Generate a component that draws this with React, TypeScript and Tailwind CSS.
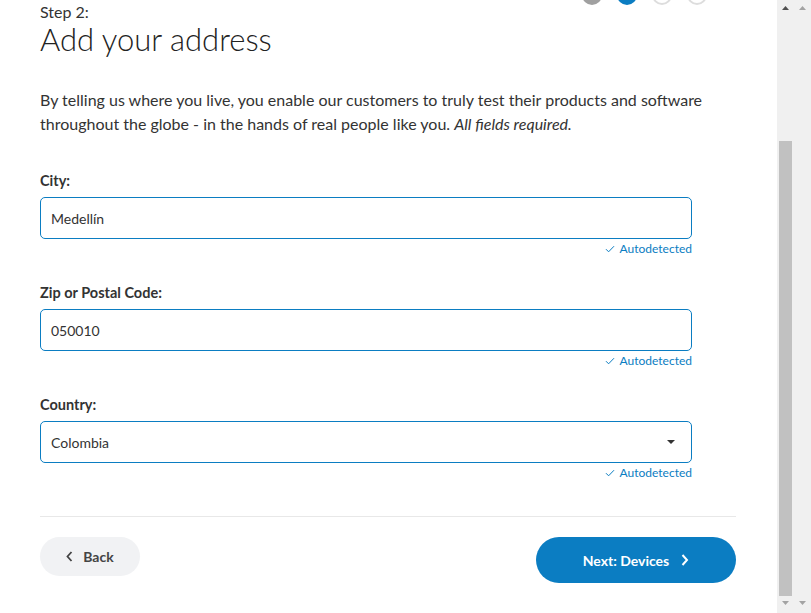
import React from "react";

const Check = () => (
  <svg width="10" height="8" viewBox="0 0 10 8" fill="none" className="mr-[5px]">
    <path d="M1 4.2 L3.6 6.8 L9 1.2" stroke="#0b7dc2" strokeWidth="1" />
  </svg>
);

function Field({ label, value, select }: { label: string; value: string; select?: boolean }) {
  return (
    <div className="flex flex-col">
      <div className="text-[14.5px] font-bold text-[#333] leading-[18px] mb-[7px]">{label}</div>
      <div className="h-[42px] w-[652px] border border-[#0b7dc2] rounded-[5px] flex items-center pl-[10px] pr-[11px] justify-between">
        <span className="text-[14px] text-[#333]">{value}</span>
        {select && (
          <svg width="10" height="6" viewBox="0 0 10 6" className="mr-[4px]">
            <path d="M1 1 L9 1 L5 5 Z" fill="#333" />
          </svg>
        )}
      </div>
      <div className="w-[652px] flex justify-end items-center mt-[2px] h-[16px]">
        <Check />
        <span className="text-[12px] text-[#0b7dc2]">Autodetected</span>
      </div>
    </div>
  );
}

export default function App() {
  return (
    <div className="w-[811px] h-[613px] flex overflow-hidden bg-white" style={{ fontFamily: "Lato, 'Open Sans', sans-serif" }}>
      <div className="w-[777px] h-[613px] pl-[40px] pr-[41px] flex flex-col">
        <div className="flex justify-between items-start">
          <div className="flex flex-col">
            <div className="text-[16px] text-[#333] leading-[18px] mt-[3px]">Step 2:</div>
            <div className="text-[31px] font-light text-[#222] leading-[36px]">Add your address</div>
          </div>
          <div className="flex gap-[15px] mt-[-15px] mr-[29px]">
            <div className="w-[20px] h-[20px] rounded-full bg-[#a0a0a0]" />
            <div className="w-[20px] h-[20px] rounded-full bg-[#0b7dc2]" />
            <div className="w-[20px] h-[20px] rounded-full border-2 border-[#ddd] bg-white" />
            <div className="w-[20px] h-[20px] rounded-full border-2 border-[#ddd] bg-white" />
          </div>
        </div>
        <p className="mt-[31px] text-[16px] leading-[24px] text-[#333]">
          By telling us where you live, you enable our customers to truly test their products and software
          throughout the globe - in the hands of real people like you. <i>All fields required.</i>
        </p>
        <div className="mt-[36px] flex flex-col gap-[27px]">
          <Field label="City:" value="Medellín" />
          <Field label="Zip or Postal Code:" value="050010" />
          <Field label="Country:" value="Colombia" select />
        </div>
        <div className="mt-[35px] border-t border-[#e8e8e8]" />
        <div className="mt-[20px] flex justify-between items-start">
          <button className="w-[100px] h-[39px] rounded-full bg-[#f1f2f4] flex items-center justify-center gap-[10px] text-[14px] font-bold text-[#444]">
            <svg width="7" height="11" viewBox="0 0 7 11"><path d="M5.5 1 L1.5 5.5 L5.5 10" stroke="#444" strokeWidth="1.8" fill="none" /></svg>
            Back
          </button>
          <button className="w-[200px] h-[46px] rounded-full bg-[#0b7dc2] flex items-center justify-center gap-[12px] text-[14px] font-bold text-white">
            Next: Devices
            <svg width="8" height="12" viewBox="0 0 8 12"><path d="M1.5 1 L6 6 L1.5 11" stroke="#fff" strokeWidth="2" fill="none" /></svg>
          </button>
        </div>
      </div>
      <div className="w-[17px] h-[613px] bg-[#f0f0f0] relative">
        <svg width="7" height="4" viewBox="0 0 7 4" className="absolute left-[5px] top-[6px]"><path d="M0 4 L3.5 0 L7 4 Z" fill="#505050" /></svg>
        <div className="absolute left-[2px] top-[141px] w-[13px] h-[455px] bg-[#c1c1c1]" />
        <svg width="7" height="4" viewBox="0 0 7 4" className="absolute left-[5px] top-[601px]"><path d="M0 0 L3.5 4 L7 0 Z" fill="#a3a3a3" /></svg>
      </div>
      <div className="w-[17px] h-[613px] bg-[#f0f0f0] relative">
        <svg width="7" height="4" viewBox="0 0 7 4" className="absolute left-[5px] top-[6px]"><path d="M0 4 L3.5 0 L7 4 Z" fill="#a3a3a3" /></svg>
        <svg width="7" height="4" viewBox="0 0 7 4" className="absolute left-[5px] top-[601px]"><path d="M0 0 L3.5 4 L7 0 Z" fill="#a3a3a3" /></svg>
      </div>
    </div>
  );
}
